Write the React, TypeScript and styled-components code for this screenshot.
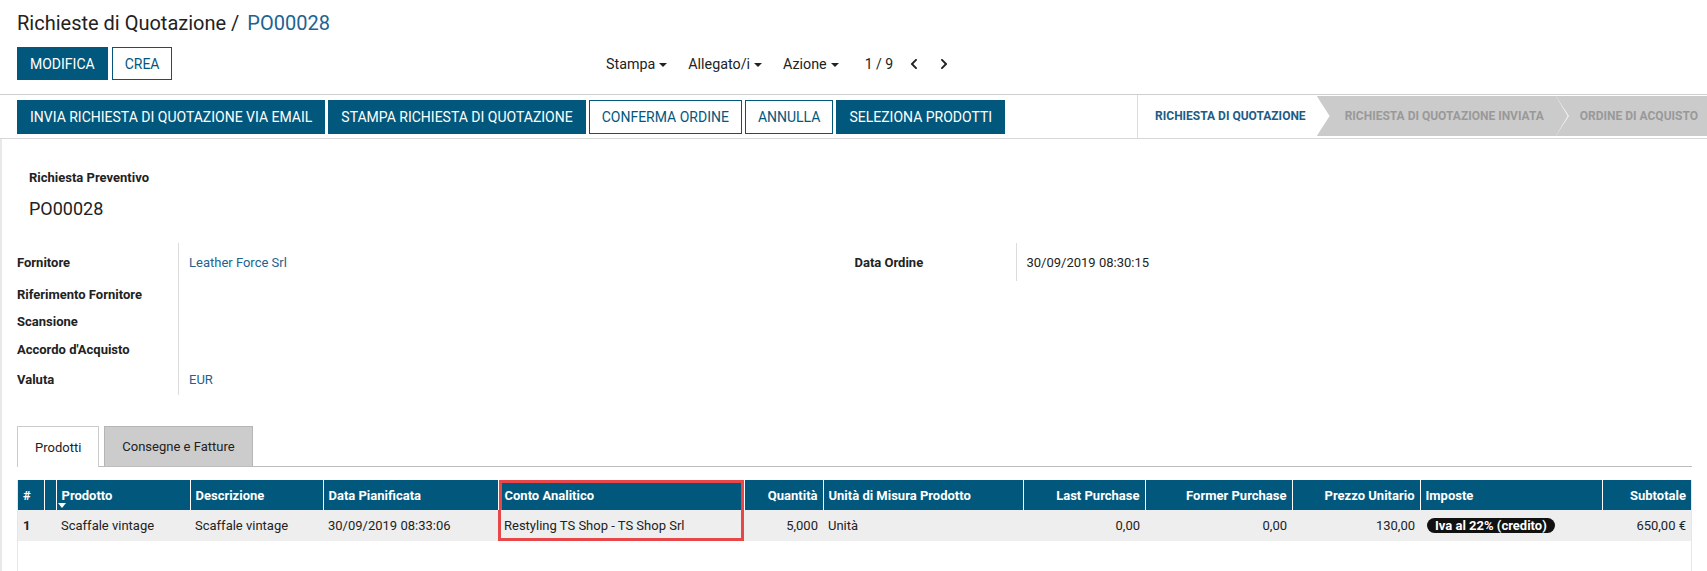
import React from "react";
import styled, { createGlobalStyle } from "styled-components";
import { FaChevronLeft, FaChevronRight } from "react-icons/fa";

const BLUE = "#02587c";
const LINK = "#21638f";

const GlobalStyle = createGlobalStyle`
  html, body { margin: 0; padding: 0; background: #fff; }
  body {
    font-family: Roboto, "Noto Sans", "Liberation Sans", sans-serif;
    font-size: 13px;
    color: #333;
    overflow: hidden;
  }
  * { box-sizing: border-box; }
`;

const Page = styled.div`
  width: 1707px;
  height: 571px;
  overflow: hidden;
`;

const ControlPanel = styled.div`
  padding: 11px 17px 14px 17px;
  border-bottom: 1px solid #cfcfcf;
  display: flex;
  flex-direction: column;
  gap: 12px;
`;

const Breadcrumb = styled.div`
  font-size: 20px;
  line-height: 24px;
  color: #222;
  display: flex;
  gap: 8px;
`;

const Crumb = styled.span<{ $active?: boolean }>`
  color: ${(p) => (p.$active ? LINK : "#222")};
`;

const CpRow = styled.div`
  display: flex;
  align-items: center;
  height: 33px;
`;

const CpLeft = styled.div`
  width: 589px;
  display: flex;
  gap: 4px;
`;

const Button = styled.button<{ $primary?: boolean; $h?: number }>`
  height: ${(p) => p.$h ?? 33}px;
  padding: 0 12px;
  font-family: inherit;
  font-size: 14px;
  text-transform: uppercase;
  border: 1px solid ${BLUE};
  background: ${(p) => (p.$primary ? BLUE : "#fff")};
  color: ${(p) => (p.$primary ? "#fff" : BLUE)};
  border-radius: 0;
  cursor: pointer;
  white-space: nowrap;
`;

const Sidebar = styled.div`
  display: flex;
  align-items: center;
  gap: 21px;
`;

const Dropdown = styled.span`
  font-size: 14.3px;
  color: #222;
  display: inline-flex;
  align-items: center;
  gap: 4px;
  &::after {
    content: "";
    border-top: 4px solid #222;
    border-left: 4px solid transparent;
    border-right: 4px solid transparent;
    margin-top: 2px;
  }
`;

const Pager = styled.div`
  display: flex;
  align-items: center;
  margin-left: 26px;
  gap: 15px;
  color: #222;
`;

const PagerValue = styled.span`
  font-size: 14px;
`;

const PagerArrows = styled.div`
  display: flex;
  align-items: center;
  gap: 18px;
`;

const Statusbar = styled.div`
  display: flex;
  align-items: stretch;
  height: 44px;
  border-bottom: 1px solid #d6d6d6;
`;

const StatusButtons = styled.div`
  flex: 1;
  display: flex;
  align-items: center;
  gap: 3px;
  padding-left: 17px;
`;

const StatusSteps = styled.div`
  display: flex;
  border-left: 1px solid #ddd;
  overflow: hidden;
`;

const Step = styled.div<{ $active?: boolean; $z: number; $pl: number; $pr: number; $last?: boolean }>`
  position: relative;
  z-index: ${(p) => p.$z};
  display: flex;
  align-items: center;
  padding: 0 ${(p) => p.$pr}px 0 ${(p) => p.$pl}px;
  margin: 1px 0 2px;
  background: ${(p) => (p.$active ? "#fff" : "#cbcbcb")};
  color: ${(p) => (p.$active ? "#1d5c86" : "#999")};
  font-weight: 700;
  font-size: 12px;
  text-transform: uppercase;
  white-space: nowrap;
  &::before {
    content: "";
    display: ${(p) => (p.$last ? "none" : "block")};
    position: absolute;
    top: 0;
    bottom: 0;
    right: -13px;
    width: 13px;
    background: #fff;
    clip-path: polygon(0 0, 100% 50%, 0 100%);
  }
  &::after {
    content: "";
    display: ${(p) => (p.$last ? "none" : "block")};
    position: absolute;
    top: 0;
    bottom: 0;
    right: -12px;
    width: 12px;
    background: ${(p) => (p.$active ? "#fff" : "#cbcbcb")};
    clip-path: polygon(0 0, 100% 50%, 0 100%);
  }
`;

const Sheet = styled.div`
  height: 433px;
  border-left: 2px solid #e8e8e8;
  padding: 30px 15px 0 15px;
`;

const TitleBlock = styled.div`
  padding-left: 12px;
  display: flex;
  flex-direction: column;
  gap: 10px;
`;

const TitleLabel = styled.div`
  font-weight: 700;
  font-size: 13px;
  line-height: 18px;
  color: #222;
`;

const TitleValue = styled.div`
  font-size: 18px;
  line-height: 24px;
  color: #222;
`;

const Groups = styled.div`
  margin-top: 22px;
  display: grid;
  grid-template-columns: 1fr 1fr;
`;

const FieldGroup = styled.div`
  display: grid;
  grid-template-columns: 162px 1fr;
  align-content: start;
`;

const Label = styled.div<{ $h: number }>`
  height: ${(p) => p.$h}px;
  display: flex;
  align-items: center;
  font-weight: 700;
  color: #222;
  border-right: 1px solid #dcdcdc;
`;

const Value = styled.div<{ $h: number; $link?: boolean }>`
  height: ${(p) => p.$h}px;
  display: flex;
  align-items: center;
  padding-left: 10px;
  color: ${(p) => (p.$link ? LINK : "#222")};
`;

const Tabs = styled.div`
  margin-top: 31px;
  display: flex;
  gap: 5px;
  border-bottom: 1px solid #bdbdbd;
`;

const Tab = styled.div<{ $active?: boolean }>`
  padding: 0 17px;
  display: flex;
  align-items: center;
  font-size: 13px;
  color: #222;
  border: 1px solid ${(p) => (p.$active ? "#ccc" : "#b5b5b5")};
  border-bottom: none;
  background: ${(p) => (p.$active ? "#fff" : "#cccccc")};
  margin-bottom: ${(p) => (p.$active ? "-1px" : "0")};
  height: ${(p) => (p.$active ? 41 : 40)}px;
`;

const TableWrap = styled.div`
  margin-top: 13px;
  border-left: 1px solid #e6e6e6;
  border-right: 1px solid #e6e6e6;
  height: 200px;
`;

const Table = styled.table`
  width: 100%;
  table-layout: fixed;
  border-collapse: collapse;
`;

const Col = styled.col<{ $w: number }>`
  width: ${(p) => p.$w}px;
`;

const Th = styled.th<{ $right?: boolean; $hl?: boolean; $sort?: boolean }>`
  position: relative;
  height: 30px;
  background: ${BLUE};
  color: #fff;
  font-weight: 700;
  font-size: 13px;
  text-align: ${(p) => (p.$right ? "right" : "left")};
  padding: 0 5px;
  border-left: 1px solid #fff;
  white-space: nowrap;
  overflow: visible;
  &:first-child { border-left: none; }
  box-shadow: ${(p) =>
    p.$hl ? "inset 3px 0 0 #e8474a, inset -3px 0 0 #e8474a, inset 0 3px 0 #e8474a" : "none"};
  &::after {
    content: "";
    display: ${(p) => (p.$sort ? "block" : "none")};
    position: absolute;
    left: 1px;
    bottom: 2px;
    border-top: 5px solid #fff;
    border-left: 4px solid transparent;
    border-right: 4px solid transparent;
  }
`;

const Td = styled.td<{ $right?: boolean; $hl?: boolean; $bold?: boolean }>`
  height: 31px;
  background: #eeeeee;
  color: #222;
  font-size: 13px;
  font-weight: ${(p) => (p.$bold ? 700 : 400)};
  text-align: ${(p) => (p.$right ? "right" : "left")};
  padding: 0 5px;
  white-space: nowrap;
  overflow: hidden;
  box-shadow: ${(p) =>
    p.$hl ? "inset 3px 0 0 #e8474a, inset -3px 0 0 #e8474a, inset 0 -3px 0 #e8474a" : "none"};
`;

const HlText = styled.span`
  padding-left: 1px;
`;

const Badge = styled.span`
  display: inline-block;
  margin-left: 2px;
  background: #111;
  color: #fff;
  font-weight: 700;
  font-size: 13px;
  line-height: 15px;
  padding: 0 8px;
  border-radius: 8px;
`;

const columns = [
  { key: "n", label: "#", w: 26 },
  { key: "h", label: "", w: 12 },
  { key: "p", label: "Prodotto", w: 134, sort: true },
  { key: "d", label: "Descrizione", w: 133 },
  { key: "dt", label: "Data Pianificata", w: 175 },
  { key: "c", label: "Conto Analitico", w: 246, hl: true },
  { key: "q", label: "Quantità", w: 79, right: true },
  { key: "u", label: "Unità di Misura Prodotto", w: 200 },
  { key: "lp", label: "Last Purchase", w: 122, right: true },
  { key: "fp", label: "Former Purchase", w: 147, right: true },
  { key: "pu", label: "Prezzo Unitario", w: 128, right: true },
  { key: "i", label: "Imposte", w: 182 },
  { key: "s", label: "Subtotale", w: 89, right: true },
];

const fieldsLeft = [
  { label: "Fornitore", value: "Leather Force Srl", link: true, h: 38 },
  { label: "Riferimento Fornitore", value: "", h: 26 },
  { label: "Scansione", value: "", h: 28 },
  { label: "Accordo d'Acquisto", value: "", h: 28 },
  { label: "Valuta", value: "EUR", link: true, h: 32 },
];

export default function App() {
  return (
    <Page>
      <GlobalStyle />
      <ControlPanel>
        <Breadcrumb>
          <Crumb>Richieste di Quotazione /</Crumb>
          <Crumb $active>PO00028</Crumb>
        </Breadcrumb>
        <CpRow>
          <CpLeft>
            <Button $primary>Modifica</Button>
            <Button>Crea</Button>
          </CpLeft>
          <Sidebar>
            <Dropdown>Stampa</Dropdown>
            <Dropdown>Allegato/i</Dropdown>
            <Dropdown>Azione</Dropdown>
          </Sidebar>
          <Pager>
            <PagerValue>1 / 9</PagerValue>
            <PagerArrows>
              <FaChevronLeft size={12} />
              <FaChevronRight size={12} />
            </PagerArrows>
          </Pager>
        </CpRow>
      </ControlPanel>
      <Statusbar>
        <StatusButtons>
          <Button $primary $h={34}>Invia richiesta di quotazione via email</Button>
          <Button $primary $h={34}>Stampa richiesta di quotazione</Button>
          <Button $h={34}>Conferma ordine</Button>
          <Button $h={34}>Annulla</Button>
          <Button $primary $h={34}>Seleziona prodotti</Button>
        </StatusButtons>
        <StatusSteps>
          <Step $active $z={3} $pl={17} $pr={11}>Richiesta di quotazione</Step>
          <Step $z={2} $pl={28} $pr={12}>Richiesta di quotazione inviata</Step>
          <Step $z={1} $pl={24} $pr={9} $last>Ordine di acquisto</Step>
        </StatusSteps>
      </Statusbar>
      <Sheet>
        <TitleBlock>
          <TitleLabel>Richiesta Preventivo</TitleLabel>
          <TitleValue>PO00028</TitleValue>
        </TitleBlock>
        <Groups>
          <FieldGroup>
            {fieldsLeft.map((f) => (
              <React.Fragment key={f.label}>
                <Label $h={f.h}>{f.label}</Label>
                <Value $h={f.h} $link={f.link}>{f.value}</Value>
              </React.Fragment>
            ))}
          </FieldGroup>
          <FieldGroup>
            <Label $h={38}>Data Ordine</Label>
            <Value $h={38}>30/09/2019 08:30:15</Value>
          </FieldGroup>
        </Groups>
        <Tabs>
          <Tab $active>Prodotti</Tab>
          <Tab>Consegne e Fatture</Tab>
        </Tabs>
        <TableWrap>
          <Table>
            <colgroup>
              {columns.map((c) => (
                <Col key={c.key} $w={c.w} />
              ))}
            </colgroup>
            <thead>
              <tr>
                {columns.map((c) => (
                  <Th key={c.key} $right={c.right} $hl={c.hl} $sort={c.sort}>
                    {c.hl ? <HlText>{c.label}</HlText> : c.label}
                  </Th>
                ))}
              </tr>
            </thead>
            <tbody>
              <tr>
                <Td $bold>1</Td>
                <Td></Td>
                <Td>Scaffale vintage</Td>
                <Td>Scaffale vintage</Td>
                <Td>30/09/2019 08:33:06</Td>
                <Td $hl><HlText>Restyling TS Shop - TS Shop Srl</HlText></Td>
                <Td $right>5,000</Td>
                <Td>Unità</Td>
                <Td $right>0,00</Td>
                <Td $right>0,00</Td>
                <Td $right>130,00</Td>
                <Td><Badge>Iva al 22% (credito)</Badge></Td>
                <Td $right>650,00 €</Td>
              </tr>
            </tbody>
          </Table>
        </TableWrap>
      </Sheet>
    </Page>
  );
}
